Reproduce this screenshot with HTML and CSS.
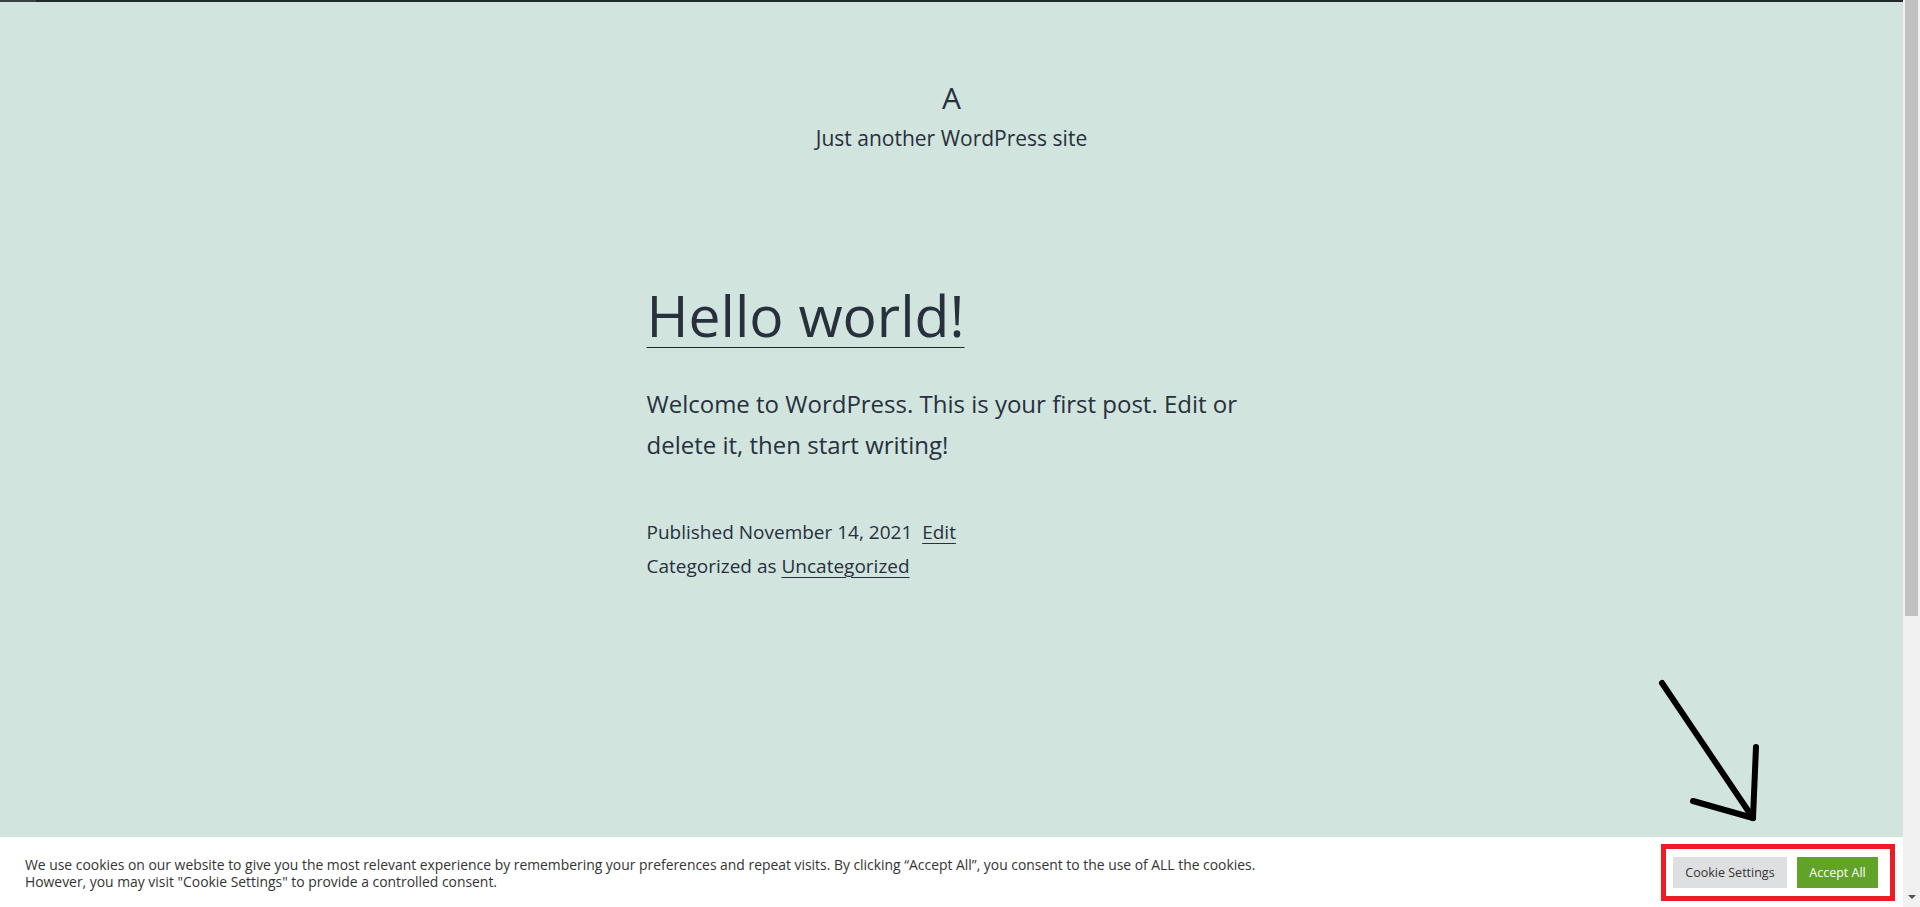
FILE: index.html
```html
<!DOCTYPE html>
<html lang="en">
<head>
<meta charset="utf-8">
<title>A – Just another WordPress site</title>
<link rel="stylesheet" href="styles.css">
</head>
<body>
<div class="frame">
  <div class="page">
    <div class="topline"><span class="topline-seg"></span></div>
    <header class="site-header">
      <p class="site-title">A</p>
      <p class="site-description">Just another WordPress site</p>
    </header>
    <main class="site-main">
      <article class="post">
        <h2 class="entry-title"><a href="#">Hello world!</a></h2>
        <div class="entry-content">
          <p>Welcome to WordPress. This is your first post. Edit or delete it, then start writing!</p>
        </div>
        <footer class="entry-footer">
          <div class="posted-on">Published November 14, 2021 <a class="edit-link" href="#">Edit</a></div>
          <div class="cat-links">Categorized as <a href="#">Uncategorized</a></div>
        </footer>
      </article>
    </main>
    <div class="cookie-bar">
      <p class="cookie-text">We use cookies on our website to give you the most relevant experience by remembering your preferences and repeat visits. By clicking “Accept All”, you consent to the use of ALL the cookies.<br>However, you may visit "Cookie Settings" to provide a controlled consent.</p>
      <div class="cookie-actions">
        <button class="btn btn-settings">Cookie Settings</button>
        <button class="btn btn-accept">Accept All</button>
      </div>
    </div>
  </div>
  <div class="scrollbar">
    <div class="thumb"></div>
    <div class="track"></div>
    <div class="arrow-down"></div>
  </div>
</div>
<svg class="annotation" width="1920" height="907" viewBox="0 0 1920 907">
  <rect x="1663.5" y="846.5" width="229" height="52" fill="none" stroke="#ed1c24" stroke-width="5"/>
  <g stroke="#000" stroke-width="6" stroke-linecap="round" fill="none">
    <path d="M1662 683 L1753 818"/>
    <path d="M1756 747 L1753 818"/>
    <path d="M1693 801 L1753 818"/>
  </g>
</svg>
</body>
</html>
```

FILE: styles.css
```css
* { box-sizing: border-box; }
html, body { margin: 0; padding: 0; }
body {
  background: #d1e4dd;
  color: #28303d;
  font-family: "Open Sans", "Noto Sans", sans-serif;
  width: 1920px;
  height: 907px;
  overflow: hidden;
}
.frame {
  display: flex;
  width: 1920px;
  height: 907px;
}
.page {
  width: 1903px;
  height: 907px;
  display: flex;
  flex-direction: column;
  background: #d1e4dd;
}
.topline {
  height: 2px;
  background: #1e2a2b;
  display: flex;
}
.topline-seg {
  width: 36px;
  background: #3a4246;
}
.site-header {
  text-align: center;
  padding-top: 76px;
}
.site-title {
  margin: 0;
  font-size: 30px;
  line-height: 39px;
  text-transform: uppercase;
}
.site-description {
  margin: 7px 0 0;
  font-size: 21px;
  line-height: 29px;
}
.site-main {
  width: 610px;
  margin: 0 auto;
  padding-top: 123px;
}
.entry-title {
  margin: 0;
  font-weight: 400;
  font-size: 57px;
  line-height: 78px;
}
.entry-title a {
  color: #28303d;
  text-decoration: underline;
  text-decoration-thickness: 1px;
  text-underline-offset: 10px;
  text-decoration-color: #1e2a2b;
}
.entry-content {
  margin-top: 29px;
  font-size: 24px;
  line-height: 41px;
}
.entry-content p { margin: 0; }
.entry-footer {
  margin-top: 50px;
  font-size: 19px;
  line-height: 34px;
}
.entry-footer a {
  color: #28303d;
  text-decoration: underline;
  text-decoration-thickness: 1px;
  text-underline-offset: 4px;
}
.edit-link { margin-left: 5px; }
.cookie-bar {
  margin-top: auto;
  height: 70px;
  background: #fff;
  display: flex;
  align-items: center;
  justify-content: space-between;
  padding: 0 25px;
}
.cookie-text {
  margin: 0;
  padding-top: 2px;
  font-size: 13.9px;
  line-height: 17px;
  color: #333;
}
.cookie-actions {
  display: flex;
  gap: 10px;
}
.btn {
  font-family: inherit;
  font-size: 12.5px;
  height: 31px;
  border: 0;
  padding: 0;
  white-space: nowrap;
  cursor: pointer;
}
.btn-settings { background: #dedfe0; color: #333; width: 114px; }
.btn-accept { background: #61a229; color: #fff; width: 81px; }
.scrollbar {
  width: 17px;
  height: 907px;
  background: #f1f1f1;
  display: flex;
  flex-direction: column;
  align-items: center;
}
.thumb {
  width: 13px;
  height: 616px;
  background: #c1c1c1;
}
.track { flex: 1; }
.arrow-down {
  width: 0; height: 0;
  border-left: 4px solid transparent;
  border-right: 4px solid transparent;
  border-top: 4px solid #505050;
  margin-bottom: 8px;
}
.annotation {
  position: absolute;
  left: 0; top: 0;
  pointer-events: none;
}
```
